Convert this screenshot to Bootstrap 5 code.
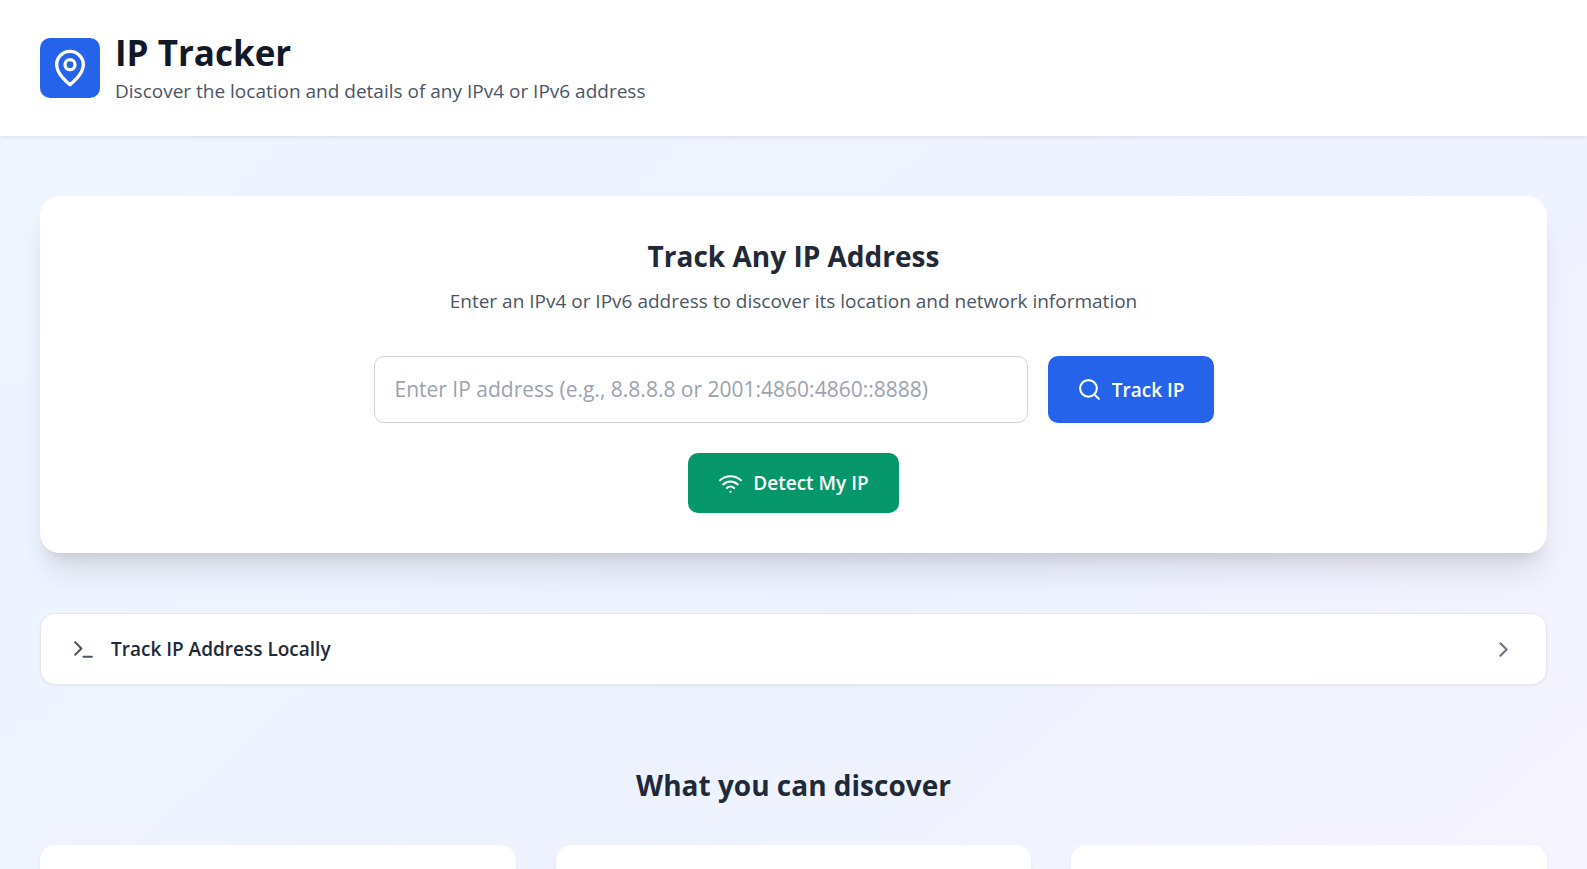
<!DOCTYPE html>
<html lang="en">
<head>
<meta charset="utf-8">
<meta name="viewport" content="width=device-width, initial-scale=1">
<title>IP Tracker</title>
<link href="https://cdn.jsdelivr.net/npm/bootstrap@5.3.0/dist/css/bootstrap.min.css" rel="stylesheet">
<style>
  body {
    font-family: "Segoe UI", "Open Sans", "Noto Sans", sans-serif;
    font-size: 19px;
    line-height: 30px;
    color: #1f2937;
    background: linear-gradient(to bottom right, #eff6ff, #eef2ff 50%, #faf5ff) 0 0 / 100% 160% no-repeat;
  }
  svg { fill: none; stroke: currentColor; stroke-width: 2; stroke-linecap: round; stroke-linejoin: round; flex-shrink: 0; }
  .icon-sm { width: 25px; height: 25px; }
  .icon-lg { width: 40px; height: 40px; }
  .site-header { padding: 30px 40px; box-shadow: 0 1px 4px rgba(0, 0, 0, .1); }
  .logo { padding: 10px; border-radius: 10px; background: #2563eb; }
  .site-title { font-size: 35px; line-height: 46px; color: #111827; }
  .muted { color: #4b5563; }
  .chevron { color: #6b7280; }
  .page-main { padding: 60px 40px 0; }
  .tracker { padding: 40px; border-radius: 20px; box-shadow: 0 25px 31px -6px rgba(0, 0, 0, .1), 0 10px 13px -7px rgba(0, 0, 0, .1); }
  .section-title { font-size: 28px; line-height: 40px; }
  .gap-10 { gap: 10px; }
  .gap-15 { gap: 15px; }
  .gap-20 { gap: 20px; }
  .intro { margin: 10px 0 40px; }
  .ip-form { max-width: 840px; margin-bottom: 30px; }
  .ip-form .form-control { padding: 15px 20px; font-size: 21px; line-height: 35px; border-color: #d1d5db; border-radius: 10px; color: #111827; }
  .ip-form .form-control::placeholder { color: #9ca3af; }
  .action { padding: 15px 30px; border: 0; border-radius: 10px; font-size: 19px; line-height: 30px; color: #fff; }
  .action-blue { padding: 15px 29px; background: #2563eb; }
  .action-blue:hover { background: #1d4ed8; color: #fff; }
  .action-green { background: #059669; }
  .action-green:hover { background: #047857; color: #fff; }
  .local-toggle { margin: 60px 0 80px; padding: 20px 30px; border: 1px solid #e5e7eb; border-radius: 15px; font-size: 19px; line-height: 30px; color: #1f2937; box-shadow: 0 1px 3px rgba(0, 0, 0, .06); }
  .local-toggle:hover { background: #f9fafb; }
  .features { gap: 40px; margin-top: 40px; }
  .feature { border-radius: 15px 15px 0 0; box-shadow: 0 2px 4px rgba(0, 0, 0, .05); }
</style>
</head>
<body class="vh-100 overflow-hidden d-flex flex-column">
  <header class="site-header bg-white d-flex align-items-center gap-15">
    <div class="logo d-flex text-white">
      <svg class="icon-lg" viewBox="0 0 24 24" aria-hidden="true"><path d="M20 10c0 6-8 12-8 12s-8-6-8-12a8 8 0 0 1 16 0Z"/><circle cx="12" cy="10" r="3"/></svg>
    </div>
    <div>
      <h1 class="site-title fw-bold mb-0">IP Tracker</h1>
      <p class="muted mb-0">Discover the location and details of any IPv4 or IPv6 address</p>
    </div>
  </header>

  <main class="page-main flex-fill d-flex flex-column">
    <section class="tracker bg-white text-center">
      <h2 class="section-title fw-bold mb-0">Track Any IP Address</h2>
      <p class="intro muted">Enter an IPv4 or IPv6 address to discover its location and network information</p>
      <form class="ip-form mx-auto d-flex gap-20">
        <input type="text" class="form-control flex-fill" aria-label="IP address" placeholder="Enter IP address (e.g., 8.8.8.8 or 2001:4860:4860::8888)">
        <button type="submit" class="btn action action-blue fw-semibold d-flex align-items-center gap-10 text-nowrap">
          <svg class="icon-sm" viewBox="0 0 24 24" aria-hidden="true"><circle cx="11" cy="11" r="8"/><path d="m21 21-4.3-4.3"/></svg>
          Track IP
        </button>
      </form>
      <button type="button" class="btn action action-green fw-semibold d-flex align-items-center gap-10 mx-auto">
        <svg class="icon-sm" viewBox="0 0 24 24" aria-hidden="true"><path d="M12 20h.01M2 8.82a15 15 0 0 1 20 0M5 12.859a10 10 0 0 1 14 0M8.5 16.429a5 5 0 0 1 7 0"/></svg>
        Detect My IP
      </button>
    </section>

    <button type="button" class="btn local-toggle bg-white fw-semibold d-flex align-items-center gap-15">
      <svg class="icon-sm muted" viewBox="0 0 24 24" aria-hidden="true"><path d="m4 17 6-6-6-6M12 19h8"/></svg>
      Track IP Address Locally
      <svg class="icon-sm chevron ms-auto" viewBox="0 0 24 24" aria-hidden="true"><path d="m9 18 6-6-6-6"/></svg>
    </button>

    <h2 class="section-title fw-bold text-center mb-0">What you can discover</h2>
    <div class="features flex-fill d-flex">
      <div class="feature bg-white flex-fill"></div>
      <div class="feature bg-white flex-fill"></div>
      <div class="feature bg-white flex-fill"></div>
    </div>
  </main>
<script src="https://cdn.jsdelivr.net/npm/bootstrap@5.3.0/dist/js/bootstrap.bundle.min.js"></script>
</body>
</html>
